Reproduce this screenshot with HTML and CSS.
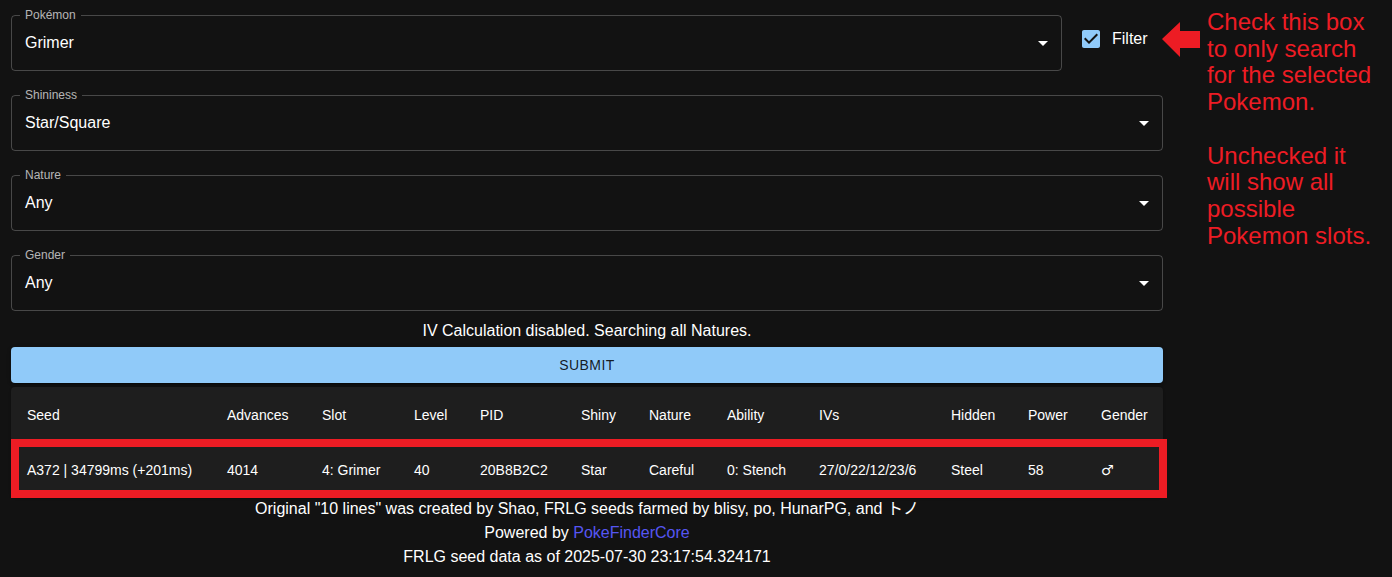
FILE: index.html
```html
<!DOCTYPE html>
<html lang="en">
<head>
<meta charset="utf-8">
<title>FRLG Seed Finder</title>
<link rel="stylesheet" href="styles.css">
</head>
<body>
<div class="page">
  <main class="form">
    <div class="first-row">
      <div class="field field-narrow">
        <span class="field-label">Pokémon</span>
        <span class="field-value">Grimer</span>
        <svg class="drop-icon" viewBox="0 0 24 24" width="24" height="24"><path d="M7 10l5 5 5-5z"/></svg>
      </div>
      <label class="filter">
        <svg class="check-icon" viewBox="0 0 24 24" width="24" height="24"><path d="M19 3H5c-1.11 0-2 .9-2 2v14c0 1.1.89 2 2 2h14c1.11 0 2-.9 2-2V5c0-1.1-.89-2-2-2zm-9 14l-5-5 1.41-1.41L10 14.17l7.59-7.59L19 8l-9 9z"/></svg>
        <span class="filter-text">Filter</span>
      </label>
    </div>
    <div class="field">
      <span class="field-label">Shininess</span>
      <span class="field-value">Star/Square</span>
      <svg class="drop-icon" viewBox="0 0 24 24" width="24" height="24"><path d="M7 10l5 5 5-5z"/></svg>
    </div>
    <div class="field">
      <span class="field-label">Nature</span>
      <span class="field-value">Any</span>
      <svg class="drop-icon" viewBox="0 0 24 24" width="24" height="24"><path d="M7 10l5 5 5-5z"/></svg>
    </div>
    <div class="field">
      <span class="field-label">Gender</span>
      <span class="field-value">Any</span>
      <svg class="drop-icon" viewBox="0 0 24 24" width="24" height="24"><path d="M7 10l5 5 5-5z"/></svg>
    </div>
    <p class="iv-note">IV Calculation disabled. Searching all Natures.</p>
    <button class="submit" type="button">Submit</button>
    <div class="paper">
      <table class="results">
        <colgroup>
          <col class="c-seed"><col class="c-adv"><col class="c-slot"><col class="c-level">
          <col class="c-pid"><col class="c-shiny"><col class="c-nature"><col class="c-ability">
          <col class="c-ivs"><col class="c-hidden"><col class="c-power"><col class="c-gender">
        </colgroup>
        <thead>
          <tr>
            <th>Seed</th><th>Advances</th><th>Slot</th><th>Level</th><th>PID</th><th>Shiny</th>
            <th>Nature</th><th>Ability</th><th>IVs</th><th>Hidden</th><th>Power</th><th>Gender</th>
          </tr>
        </thead>
        <tbody>
          <tr>
            <td>A372 | 34799ms (+201ms)</td><td>4014</td><td>4: Grimer</td><td>40</td><td>20B8B2C2</td><td>Star</td>
            <td>Careful</td><td>0: Stench</td><td>27/0/22/12/23/6</td><td>Steel</td><td>58</td><td class="gender">♂</td>
          </tr>
        </tbody>
      </table>
    </div>
    <footer class="credits">
      <p>Original "10 lines" was created by Shao, FRLG seeds farmed by blisy, po, HunarPG, and トノ</p>
      <p>Powered by <a class="link" href="#">PokeFinderCore</a></p>
      <p>FRLG seed data as of 2025-07-30 23:17:54.324171</p>
    </footer>
  </main>

  <svg class="note-arrow" viewBox="0 0 39 37" width="39" height="37"><polygon points="0,17 18,0 18,9 38,9 38,26 18,26 18,35"/></svg>
  <div class="note-text">Check this box<br>to only search<br>for the selected<br>Pokemon.<br><br>Unchecked it<br>will show all<br>possible<br>Pokemon slots.</div>
  <div class="note-box"></div>
</div>
</body>
</html>
```

FILE: styles.css
```css
* { box-sizing: border-box; }

html, body {
  margin: 0;
  padding: 0;
  background: #121212;
  color: #fff;
  font-family: "Liberation Sans", "Noto Sans CJK JP", sans-serif;
}

.page {
  position: relative;
  width: 1392px;
  height: 577px;
  padding: 15px 0 0 11px;
  overflow: hidden;
}

.form {
  width: 1152px;
  display: flex;
  flex-direction: column;
}

.first-row {
  display: flex;
  align-items: flex-start;
}

.field {
  position: relative;
  height: 56px;
  border: 1px solid rgba(255, 255, 255, 0.23);
  border-radius: 4px;
  display: flex;
  align-items: center;
  padding: 0 6px 0 13px;
  margin-bottom: 24px;
}

.field-narrow {
  width: 1051px;
}

.field-label {
  position: absolute;
  left: 8px;
  top: -7px;
  padding: 0 5px;
  background: #121212;
  color: rgba(255, 255, 255, 0.7);
  font-size: 12px;
  line-height: 12px;
}

.field-value {
  flex: 1;
  font-size: 16px;
  line-height: 23px;
  padding-bottom: 1px;
}

.drop-icon {
  fill: #fff;
  flex: none;
}

.filter {
  display: flex;
  align-items: center;
  margin: 12px 0 0 17px;
  height: 24px;
}

.check-icon {
  fill: #90caf9;
  flex: none;
}

.filter-text {
  margin-left: 9px;
  font-size: 16px;
  line-height: 20px;
  padding-bottom: 1px;
}

.iv-note {
  margin: -16px 0 4px;
  text-align: center;
  font-size: 16px;
  line-height: 24px;
}

.submit {
  height: 36px;
  border: none;
  border-radius: 4px;
  background: #90caf9;
  color: rgba(0, 0, 0, 0.87);
  font-family: "Liberation Sans", sans-serif;
  font-size: 14px;
  letter-spacing: 0.4px;
  text-transform: uppercase;
  box-shadow: 0 3px 1px -2px rgba(0,0,0,0.2), 0 2px 2px 0 rgba(0,0,0,0.14), 0 1px 5px 0 rgba(0,0,0,0.12);
  padding: 0;
}

.paper {
  margin-top: 4px;
  background: #1e1e1e;
  border-radius: 4px;
  box-shadow: 0 2px 1px -1px rgba(0,0,0,0.2), 0 1px 1px 0 rgba(0,0,0,0.14), 0 1px 3px 0 rgba(0,0,0,0.12);
}

.results {
  width: 100%;
  table-layout: fixed;
  border-collapse: collapse;
  font-size: 14px;
}

.c-seed { width: 200px; }
.c-adv { width: 95px; }
.c-slot { width: 92px; }
.c-level { width: 66px; }
.c-pid { width: 101px; }
.c-shiny { width: 68px; }
.c-nature { width: 78px; }
.c-ability { width: 92px; }
.c-ivs { width: 132px; }
.c-hidden { width: 77px; }
.c-power { width: 73px; }
.c-gender { width: 78px; }

.results th,
.results td {
  text-align: left;
  padding: 0 16px;
  border-bottom: 1px solid #515151;
  white-space: nowrap;
  color: #fff;
  font-weight: normal;
}

.results th {
  height: 56px;
  line-height: 24px;
}

.results td {
  height: 53px;
  line-height: 20px;
}

.results td.gender {
  font-family: "DejaVu Sans", sans-serif;
  font-size: 14px;
}

.credits {
  text-align: center;
  font-size: 16px;
  line-height: 24px;
}

.credits p {
  margin: 0;
}

.link {
  color: #5656f2;
  text-decoration: none;
}

.note-arrow {
  position: absolute;
  left: 1162px;
  top: 22px;
  fill: #ed1c24;
}

.note-text {
  position: absolute;
  left: 1207px;
  top: 9px;
  color: #ed1c24;
  font-size: 24px;
  line-height: 26.7px;
  white-space: nowrap;
}

.note-box {
  position: absolute;
  left: 11px;
  top: 439px;
  width: 1156px;
  height: 59px;
  border: 8px solid #ed1c24;
}
```
